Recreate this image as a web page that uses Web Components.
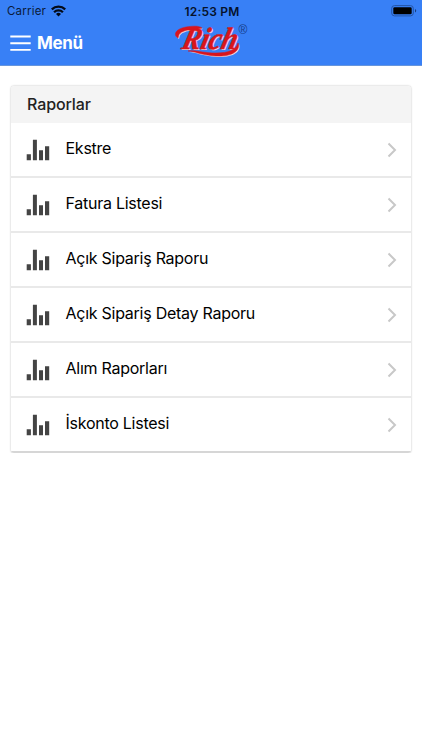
<!DOCTYPE html>
<html lang="tr">
<head>
<meta charset="utf-8">
<title>Raporlar</title>
<style>
    body{
        margin: 0;
        background: #fff;
        font-family: Inter, "Liberation Sans", sans-serif;
        color: #111;
    }
</style>
</head>
<body>

<app-header>
    <status-bar slot="status" carrier="Carrier" time="12:53 PM"></status-bar>
    <menu-button slot="menu">Menü</menu-button>
    <rich-logo slot="logo"></rich-logo>
</app-header>

<report-card>
    <span slot="title">Raporlar</span>
    <report-item>Ekstre</report-item>
    <report-item>Fatura Listesi</report-item>
    <report-item>Açık Sipariş Raporu</report-item>
    <report-item>Açık Sipariş Detay Raporu</report-item>
    <report-item>Alım Raporları</report-item>
    <report-item>İskonto Listesi</report-item>
</report-card>

<script>
function attach(el, html){
    const template = document.createElement("template");
    template.innerHTML = html;
    el.attachShadow({mode:"open"});
    el.shadowRoot.appendChild(template.content.cloneNode(true));
}

class AppHeader extends HTMLElement{
    constructor(){
        super();
        attach(this, `
<style>
    :host{
        display: block;
        height: 66px;
        box-sizing: border-box;
        background: #3880f6;
        border-bottom: 1px solid #6695dc;
    }
    .Header_bar{
        display: grid;
        grid-template-columns: 1fr 76px 1fr;
        height: 43px;
    }
</style>
<slot name="status"></slot>
<div class="Header_bar">
    <slot name="menu"></slot>
    <slot name="logo"></slot>
</div>`);
    }
}

class StatusBar extends HTMLElement{
    constructor(){
        super();
        attach(this, `
<style>
    :host{
        display: grid;
        grid-template-columns: 1fr auto 1fr;
        align-items: center;
        height: 22px;
        box-sizing: border-box;
        padding: 0 5px 0 7px;
        font-size: 11.5px;
        color: #0a1a3a;
    }
    .Status_left{
        display: flex;
        align-items: center;
        gap: 5px;
        letter-spacing: .2px;
    }
    .Status_time{
        font-size: 12px;
        font-weight: 600;
        color: #06122b;
        letter-spacing: .2px;
    }
    .Status_battery{
        justify-self: end;
    }
    svg{
        display: block;
    }
</style>
<div class="Status_left">
    <span class="Status_carrier"></span>
    <svg width="15" height="12" viewBox="0 0 15 12" fill="none" stroke="#030a18" stroke-width="2.3">
        <path d="M.8 4.3a9.7 9.7 0 0 1 13.4 0"/>
        <path d="M3.1 7.2a6.3 6.3 0 0 1 8.8 0"/>
        <path d="M5 9a3.6 3.6 0 0 1 5 0L7.5 11.5z" fill="#030a18" stroke="none"/>
    </svg>
</div>
<span class="Status_time"></span>
<svg class="Status_battery" width="26" height="12" viewBox="0 0 26 12">
    <rect x=".7" y=".6" width="21.6" height="10.3" rx="2.8" fill="none" stroke="#2454a6"/>
    <rect x="2.3" y="2.2" width="18.4" height="7.1" rx="1.3"/>
    <path d="M24 4v3.6q1.2-.5 1.2-1.8T24 4z" fill="#173c7c"/>
</svg>`);
        this.shadowRoot.querySelector(".Status_carrier").textContent = this.getAttribute("carrier");
        this.shadowRoot.querySelector(".Status_time").textContent = this.getAttribute("time");
    }
}

class MenuButton extends HTMLElement{
    constructor(){
        super();
        attach(this, `
<style>
    :host{
        display: flex;
        align-items: center;
        gap: 6px;
        padding: 0 0 1px 10px;
        color: #fff;
        font-size: 17px;
        font-weight: 700;
        letter-spacing: -.35px;
    }
</style>
<svg width="21" height="16" viewBox="0 0 21 16" stroke="#fff" stroke-width="1.9">
    <path d="M.3 1.5h20.4M.3 8.2h20.4M.3 14.9h20.4"/>
</svg>
<slot></slot>`);
    }
}

class RichLogo extends HTMLElement{
    constructor(){
        super();
        attach(this, `
<style>
    :host{
        display: block;
    }
    svg{
        display: block;
        overflow: visible;
    }
    .Logo_word{
        font: italic bold 31px "Liberation Serif", serif;
    }
    .Logo_mark{
        font: 12px "Liberation Sans", sans-serif;
        fill: #163c86;
    }
</style>
<svg width="76" height="43" viewBox="173 22 76 43">
    <defs>
        <g id="brand">
            <text class="Logo_word" transform="translate(180.5 48.5) skewX(-14)" textLength="55" lengthAdjust="spacingAndGlyphs">Rich</text>
            <path d="M178 38C173 35 175 29 186 27C192 26 199 25.500 202 28L196 29.500C186 29 179 32 178.500 36z"/>
            <path d="M188 51C195 49.500 203 53 216 53C228 53 236 50 238 43C241 51 231 57 216 56C201 55 194 51 188 51z"/>
        </g>
    </defs>
    <use href="#brand" x="1" y="1" fill="#e9d5df"/>
    <use href="#brand" fill="#d9151c" stroke="#d9151c" stroke-width=".5"/>
    <text class="Logo_mark" x="238.500" y="34">®</text>
</svg>`);
    }
}

class ReportCard extends HTMLElement{
    constructor(){
        super();
        attach(this, `
<style>
    :host{
        display: block;
        margin: 20px 11px 0;
        border-radius: 3px;
        overflow: hidden;
        background: #fff;
        box-shadow: 0 0 2px rgba(0,0,0,.3);
    }
    .Card_title{
        display: flex;
        align-items: center;
        height: 37px;
        box-sizing: border-box;
        padding: 0 0 1px 16px;
        background: #f4f4f4;
        font-size: 16px;
        font-weight: 500;
        letter-spacing: -.1px;
        color: #222;
    }
</style>
<div class="Card_title"><slot name="title"></slot></div>
<slot></slot>`);
    }
}

class ReportItem extends HTMLElement{
    constructor(){
        super();
        attach(this, `
<style>
    :host{
        display: flex;
        align-items: center;
        height: 55px;
        box-sizing: border-box;
        padding: 0 14px 0 15px;
        border-bottom: 2px solid #e9e9e9;
        font-size: 16px;
        color: #000;
    }
    :host(:last-child){
        border-bottom-color: #d6d6d6;
    }
    .Item_label{
        flex: 1;
        padding: 0 0 3px 15.5px;
        letter-spacing: -.26px;
    }
</style>
<svg width="24" height="22" viewBox="0 0 24 22" fill="#444">
    <path d="M.7 15.3h4.2v6H.7zM6.9 .8h4v20.5h-4zM13 11.2h4v10.1h-4zM19 7.2h4.2v14.1H19z"/>
</svg>
<span class="Item_label"><slot></slot></span>
<svg width="10" height="16" viewBox="0 0 10 16" fill="none" stroke="#c8c8c8" stroke-width="2">
    <path d="M1.5 1.5L8 8L1.5 14.5"/>
</svg>`);
    }
}

window.customElements.define("app-header", AppHeader)
window.customElements.define("status-bar", StatusBar)
window.customElements.define("menu-button", MenuButton)
window.customElements.define("rich-logo", RichLogo)
window.customElements.define("report-card", ReportCard)
window.customElements.define("report-item", ReportItem)
</script>
</body>
</html>
